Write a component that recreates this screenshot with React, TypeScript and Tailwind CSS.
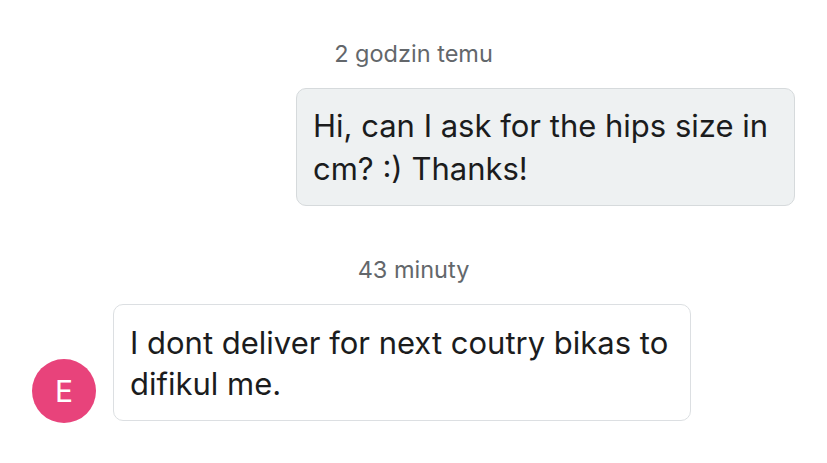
const font = { fontFamily: "Inter, 'Noto Sans', sans-serif" };

interface Message {
  id: number;
  time: string;
  text: string;
  mine: boolean;
}

const messages: Message[] = [
  { id: 1, time: "2 godzin temu", text: "Hi, can I ask for the hips size in cm? :) Thanks!", mine: true },
  { id: 2, time: "43 minuty", text: "I dont deliver for next coutry bikas to difikul me.", mine: false },
];

export default function App() {
  return (
    <div className="min-h-screen bg-white px-8 pt-[37px]" style={font}>
      {/* first message, mine */}
      <div className="text-center text-[23.5px] leading-[33px] text-[#63676b]">{messages[0].time}</div>
      <div className="mt-[18px] flex justify-end">
        <div className="w-[499px] rounded-[10px] border border-[#d6dadc] bg-[#eef1f2] px-4 py-[15px] text-[31px] leading-[43px] text-[#1b1c1d]">
          {messages[0].text}
        </div>
      </div>

      {/* second message, theirs */}
      <div className="mt-[47px] text-center text-[23.5px] leading-[33px] text-[#63676b]">{messages[1].time}</div>
      <div className="mt-[18px] flex items-end gap-[17px]">
        <div className="mb-[-2px] flex h-16 w-16 shrink-0 items-center justify-center rounded-full bg-[#e8437b] text-[30px] text-white">
          E
        </div>
        <div className="w-[578px] rounded-[10px] border border-[#dcdfe2] bg-white px-4 pt-[17px] pb-[16px] text-[31px] leading-[41px] text-[#1b1c1d]">
          {messages[1].text}
        </div>
      </div>
    </div>
  );
}
